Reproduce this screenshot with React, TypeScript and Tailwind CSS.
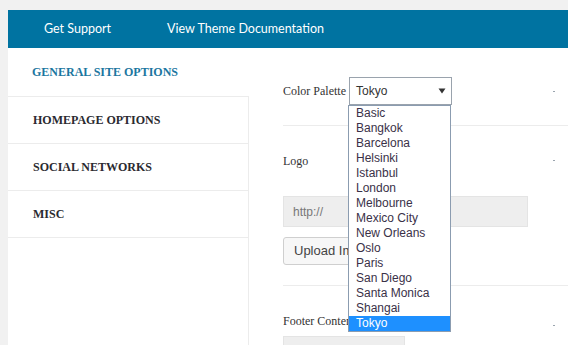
import React from "react";

const cities = [
  "Basic",
  "Bangkok",
  "Barcelona",
  "Helsinki",
  "Istanbul",
  "London",
  "Melbourne",
  "Mexico City",
  "New Orleans",
  "Oslo",
  "Paris",
  "San Diego",
  "Santa Monica",
  "Shangai",
  "Tokyo",
];

const serif = { fontFamily: '"Liberation Serif", "Times New Roman", serif' };
const arial = { fontFamily: '"Liberation Sans", Arial, sans-serif' };

function Dot() {
  return <span className="block w-[2px] h-[1px] bg-[#9aa4ae] mr-[13px]" />;
}

export default function App() {
  return (
    <div className="w-[568px] h-[345px] overflow-hidden bg-[#f1f1f1] pt-[10px] pl-[8px] flex flex-col">
      <div
        className="h-[38px] shrink-0 bg-[#0073a1] flex items-center text-white text-[12.5px]"
        style={{ fontFamily: 'Lato, "Open Sans", sans-serif' }}
      >
        <span className="ml-[36px]">Get Support</span>
        <span className="ml-[56px]">View Theme Documentation</span>
      </div>
      <div className="flex-1 bg-white flex">
        <div className="w-[241px] shrink-0 flex flex-col text-[12px] font-bold" style={serif}>
          <div className="h-[49px] flex items-center pl-[24px] text-[#1b76a0] border-b border-[#ececec]">
            GENERAL SITE OPTIONS
          </div>
          <div className="h-[47px] flex items-center pl-[25px] text-[#2a2a30] border-b border-r border-[#ececec]">
            HOMEPAGE OPTIONS
          </div>
          <div className="h-[47px] flex items-center pl-[25px] text-[#2a2a30] border-b border-r border-[#ececec]">
            SOCIAL NETWORKS
          </div>
          <div className="h-[47px] flex items-center pl-[25px] text-[#2a2a30] border-b border-r border-[#ececec]">
            MISC
          </div>
          <div className="flex-1 border-r border-[#ececec]" />
        </div>
        <div className="flex-1 pl-[34px] flex flex-col text-[12px] text-[#333]">
          <div className="pt-[29px] pb-[20px] border-b border-[#ececec] flex items-center justify-between">
            <div className="flex items-center gap-[3px]">
              <span style={serif} className="text-[12px] text-[#333]">Color Palette</span>
              <div className="relative">
                <div
                  className="w-[103px] h-[28px] border border-[#9aa3ad] bg-white flex items-center justify-between pl-[6px] pr-[5px] text-[12px] text-[#333]"
                  style={arial}
                >
                  <span>Tokyo</span>
                  <svg width="8" height="6" viewBox="0 0 8 6">
                    <path d="M0.5 0.5 L7.5 0.5 L4 5.5 Z" fill="#333" />
                  </svg>
                </div>
                <div
                  className="absolute top-full left-[-1px] w-[103px] border border-[#8b9cb0] bg-white z-10 flex flex-col"
                  style={arial}
                >
                  {cities.map((c) => (
                    <div
                      key={c}
                      className={
                        c === "Tokyo"
                          ? "h-[15px] leading-[15px] pl-[7px] text-[12px] bg-[#1e90ff] text-white"
                          : "h-[15px] leading-[15px] pl-[7px] text-[12px] text-[#3a3148]"
                      }
                    >
                      {c}
                    </div>
                  ))}
                </div>
              </div>
            </div>
            <Dot />
          </div>
          <div className="pt-[27px] pb-[20px] border-b border-[#ececec] flex flex-col">
            <div className="flex items-center justify-between h-[15px]">
              <span style={serif} className="text-[12px] text-[#333]">Logo</span>
              <Dot />
            </div>
            <div
              className="mt-[28px] w-[245px] h-[31px] bg-[#eeeeee] border border-[#e4e4e4] flex items-center pl-[9px] text-[12px] text-[#777]"
              style={arial}
            >
              http://
            </div>
            <div
              className="mt-[10px] w-[98px] h-[28px] rounded-[3px] border border-[#cfcfcf] bg-[#f7f7f7] flex items-center pl-[10px] text-[13px] text-[#444] overflow-hidden whitespace-nowrap"
              style={arial}
            >
              Upload Image
            </div>
          </div>
          <div className="pt-[27px] flex flex-col">
            <div className="flex items-center justify-between h-[15px]">
              <span style={serif} className="text-[12px] text-[#333]">Footer Content</span>
              <span className="mt-[10px]"><Dot /></span>
            </div>
            <div className="mt-[8px] w-[122px] h-[31px] bg-[#eeeeee] border border-[#e4e4e4]" />
          </div>
        </div>
      </div>
    </div>
  );
}
